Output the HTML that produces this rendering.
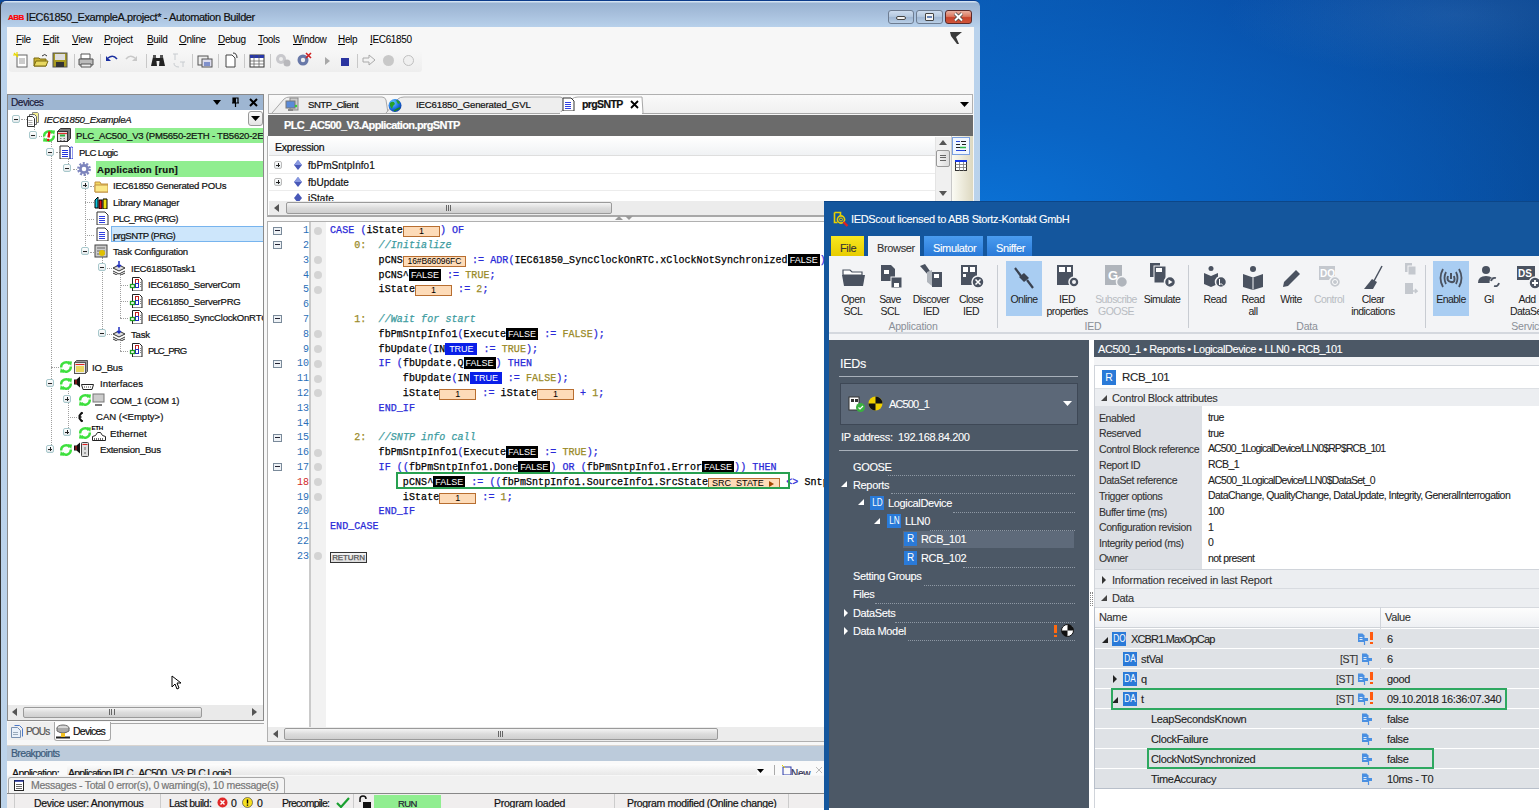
<!DOCTYPE html>
<html><head><meta charset="utf-8">
<style>
*{margin:0;padding:0;box-sizing:border-box}
html,body{width:1539px;height:810px;overflow:hidden;background:#0a4a9c;font-family:"Liberation Sans",sans-serif;font-size:10px;color:#000;position:relative}
.a{position:absolute}
.t{position:absolute;white-space:nowrap;line-height:13px;font-size:9.6px;letter-spacing:-0.25px;color:#111;-webkit-text-stroke:0.2px currentColor}
.m{font-family:"Liberation Mono",monospace}
#desk{left:975px;top:0;width:564px;height:205px;background:radial-gradient(ellipse 230px 60px at 480px 15px,rgba(90,140,200,.22),rgba(90,140,200,0)),radial-gradient(ellipse 700px 320px at 0px 215px,#0b72d6 0%,#0964c4 30%,rgba(9,84,172,0) 100%),linear-gradient(100deg,#0955ac 0%,#0849a0 45%,#07448f 100%)}
#ab{left:0;top:0;width:980px;height:810px;background:linear-gradient(#d2e2f2 0,#d2e2f2 1px,#99b3d2 2px,#a6bedb 12px,#b9d2ec 27px,#bcd3ea);border-left:1px solid #333;border-top:1px solid #0b3b8a;border-radius:6px 6px 0 0}
#abc{left:7px;top:27px;width:967px;height:783px;background:#f7f7f7}
.mi{position:absolute;top:33px;font-size:10px;letter-spacing:-0.35px;line-height:13px;white-space:nowrap}
.sep{position:absolute;top:54px;width:1px;height:14px;background:#c8c8c8}
.tb{position:absolute;top:52px;width:16px;height:16px}
.box{position:absolute;width:8px;height:8px;margin:0 0 0 0;border:1px solid #a8c8cc;background:linear-gradient(#fff,#e2e8ea);border-radius:2px}
.box:after{content:"";position:absolute;left:1px;top:2.5px;width:4px;height:1.2px;background:#222}
.box.p:before{content:"";position:absolute;left:2.5px;top:1px;width:1.2px;height:4px;background:#222}
.ico{position:absolute;width:14px;height:14px}
.dl{position:absolute;border-left:1px dotted #a0a0a0}
.dh{position:absolute;border-top:1px dotted #a0a0a0}
/* code */
.cl{position:absolute;left:330px;height:15px;line-height:15px;white-space:pre;font-family:"Liberation Mono",monospace;font-size:10px;letter-spacing:0.07px;color:#000;-webkit-text-stroke:0.25px currentColor}
.ln{position:absolute;left:284px;width:25px;text-align:right;font-family:"Liberation Mono",monospace;font-size:10px;line-height:15px;color:#2b6fb8}
.k{color:#2a2ad8}
.cm{color:#3d9ca0;font-style:italic}
.n{color:#9a8a28}
.ob{display:inline-block;height:11px;line-height:9px;vertical-align:-1px;background:#fddbb8;border:1px solid #b86e30;font-family:"Liberation Sans",sans-serif;font-size:9px;text-align:center;letter-spacing:0;color:#000;-webkit-text-stroke:0}
.fb{display:inline-block;height:12px;line-height:12px;vertical-align:0px;background:#000;color:#fff;font-family:"Liberation Sans",sans-serif;font-size:9px;text-align:center;width:32px;letter-spacing:0;-webkit-text-stroke:0}
.tr{display:inline-block;height:12px;line-height:12px;vertical-align:0px;background:#0a1fe8;color:#fff;font-family:"Liberation Sans",sans-serif;font-size:9px;text-align:center;width:32px;letter-spacing:0;-webkit-text-stroke:0}
.bp{position:absolute;left:314px;width:8px;height:8px;border-radius:50%;background:#d4d4d4}
.fold{position:absolute;left:273px;width:9px;height:8px;border:1px solid #7a8a9a;background:#eef2f6}
.fold:after{content:"";position:absolute;left:1px;top:2px;width:5px;height:1px;background:#223}
</style></head><body>
<div id="desk" class="a"></div>

<!-- ================= AUTOMATION BUILDER ================= -->
<div id="ab" class="a"></div>
<div id="abc" class="a"></div>
<!-- title -->
<div class="t" style="left:8px;top:11px;font-size:8px;font-weight:bold;color:#f00;letter-spacing:-0.5px">ABB</div>
<div class="t" style="left:26px;top:11px;font-size:11px;letter-spacing:-0.4px;color:#111">IEC61850_ExampleA.project* - Automation Builder</div>
<!-- window buttons -->
<div class="a" style="left:888px;top:10px;width:26px;height:14px;border:1px solid #6d7c91;border-radius:3px;background:linear-gradient(#cddcee,#b5c9e0 45%,#9fb6d3 55%,#b9cfe6)"></div>
<div class="a" style="left:896px;top:16px;width:10px;height:4px;background:#f4f4f4;border:1px solid #444;border-radius:2px"></div>
<div class="a" style="left:916px;top:10px;width:27px;height:14px;border:1px solid #6d7c91;border-radius:3px;background:linear-gradient(#cddcee,#b5c9e0 45%,#9fb6d3 55%,#b9cfe6)"></div>
<div class="a" style="left:925px;top:13px;width:9px;height:8px;background:#f4f4f4;border:1px solid #444;border-radius:1px"></div>
<div class="a" style="left:927px;top:16px;width:5px;height:2px;background:#6a86b6"></div>
<div class="a" style="left:945px;top:10px;width:27px;height:14px;border:1px solid #5a2a2a;border-radius:3px;background:linear-gradient(#eab0a0,#dc7a62 45%,#c8442c 55%,#d0553a)"></div>
<svg class="a" style="left:953px;top:12px" width="11" height="10"><path d="M2 1.5L9 8.5M9 1.5L2 8.5" stroke="#444" stroke-width="3.4"/><path d="M2 1.5L9 8.5M9 1.5L2 8.5" stroke="#fff" stroke-width="2"/></svg>

<!-- menu -->
<div class="mi" style="left:16px"><u style="text-decoration:underline;text-underline-offset:1px">F</u>ile</div>
<div class="mi" style="left:43px"><u style="text-decoration:underline;text-underline-offset:1px">E</u>dit</div>
<div class="mi" style="left:72px"><u style="text-decoration:underline;text-underline-offset:1px">V</u>iew</div>
<div class="mi" style="left:104px"><u style="text-decoration:underline;text-underline-offset:1px">P</u>roject</div>
<div class="mi" style="left:147px"><u style="text-decoration:underline;text-underline-offset:1px">B</u>uild</div>
<div class="mi" style="left:179px"><u style="text-decoration:underline;text-underline-offset:1px">O</u>nline</div>
<div class="mi" style="left:218px"><u style="text-decoration:underline;text-underline-offset:1px">D</u>ebug</div>
<div class="mi" style="left:258px"><u style="text-decoration:underline;text-underline-offset:1px">T</u>ools</div>
<div class="mi" style="left:293px"><u style="text-decoration:underline;text-underline-offset:1px">W</u>indow</div>
<div class="mi" style="left:338px"><u style="text-decoration:underline;text-underline-offset:1px">H</u>elp</div>
<div class="mi" style="left:370px"><u style="text-decoration:underline;text-underline-offset:1px">I</u>EC61850</div>
<svg class="a" style="left:949px;top:31px" width="14" height="14"><path d="M1 1H13L7 6L10 13H8L2 5Z" fill="#3a3a3a"/></svg>

<!-- toolbar -->
<div class="a" style="left:9px;top:50px;width:413px;height:22px;background:linear-gradient(#f7f7f7,#eeeeee);border-radius:3px"></div>
<svg class="tb" style="left:13px"><rect x="4" y="3" width="10" height="12" fill="#fff" stroke="#666"/><path d="M6 7h6M6 9h6M6 11h6" stroke="#999"/><path d="M1 1l4 4M4 0v5M0 3h5" stroke="#e8d800" stroke-width="1.2"/></svg>
<svg class="tb" style="left:33px"><path d="M1 6h5l1 1h6v7H1z" fill="#c8b030" stroke="#7a6a10"/><path d="M3 9h12l-2 5H1z" fill="#e8d860" stroke="#7a6a10"/><path d="M9 4q3-3 5 0" stroke="#333" fill="none"/></svg>
<svg class="tb" style="left:52px"><rect x="1" y="1" width="14" height="14" fill="#a89a20" stroke="#555"/><rect x="3" y="2" width="10" height="6" fill="#ddd"/><rect x="4" y="10" width="8" height="5" fill="#333"/></svg>
<div class="sep" style="left:74px"></div>
<svg class="tb" style="left:78px"><path d="M3 2h9v5H3z" fill="#fff" stroke="#555"/><path d="M1 7h14v6H1z" fill="#bbb" stroke="#555"/><path d="M3 12h10v3H3z" fill="#eee" stroke="#555"/></svg>
<div class="sep" style="left:100px"></div>
<svg class="tb" style="left:104px"><path d="M4 6q5-4 9 1" stroke="#1a2fa0" stroke-width="1.6" fill="none"/><path d="M2 4v5h5z" fill="#1a2fa0"/></svg>
<svg class="tb" style="left:123px"><path d="M12 6q-5-4-9 1" stroke="#c8c8c8" stroke-width="1.6" fill="none"/><path d="M14 4v5H9z" fill="#c8c8c8"/></svg>
<div class="sep" style="left:146px"></div>
<svg class="tb" style="left:150px"><path d="M1 14l2-9h3l1 9zM9 14l1-9h3l2 9z" fill="#222"/><rect x="6" y="6" width="4" height="3" fill="#222"/><rect x="3" y="3" width="3" height="3" fill="#555"/><rect x="10" y="3" width="3" height="3" fill="#555"/></svg>
<svg class="tb" style="left:171px"><path d="M2 2h5M4 2v6M9 10h5M12 10v5M3 11q0 4 5 4" stroke="#c8ccd0" fill="none"/></svg>
<div class="sep" style="left:192px"></div>
<svg class="tb" style="left:197px"><rect x="1" y="4" width="10" height="9" fill="#eee" stroke="#555"/><rect x="5" y="7" width="10" height="8" fill="#dde" stroke="#555"/><path d="M7 11h6M7 13h6" stroke="#2244aa"/></svg>
<div class="sep" style="left:218px"></div>
<svg class="tb" style="left:223px"><path d="M3 3h6l3 3v9H3z" fill="#fff" stroke="#444"/><path d="M10 1q4 0 4 5" stroke="#333" fill="none"/></svg>
<div class="sep" style="left:244px"></div>
<svg class="tb" style="left:249px"><rect x="1" y="3" width="14" height="12" fill="#fff" stroke="#333"/><rect x="1" y="3" width="14" height="3" fill="#2838a8"/><path d="M1 9h14M1 12h14M5 3v12M10 3v12" stroke="#555" stroke-width=".7"/></svg>
<div class="sep" style="left:270px"></div>
<svg class="tb" style="left:275px"><circle cx="6" cy="7" r="5" fill="#c8c8cc"/><circle cx="6" cy="7" r="2" fill="#eee"/><circle cx="12" cy="11" r="3.5" fill="#b8b8bc"/></svg>
<svg class="tb" style="left:296px"><circle cx="7" cy="8" r="5.5" fill="#6878a8"/><circle cx="7" cy="8" r="2.2" fill="#eee"/><path d="M10 1l5 5M15 1l-5 5" stroke="#d02020" stroke-width="1.6"/></svg>
<svg class="tb" style="left:320px"><path d="M5 5l5 4-5 4z" fill="#a8a8a8"/></svg>
<div class="a" style="left:341px;top:58px;width:8px;height:8px;background:#2a34a0"></div>
<div class="sep" style="left:357px"></div>
<svg class="tb" style="left:361px"><path d="M2 6h6V3l6 5-6 5v-3H2z" fill="none" stroke="#aaa"/></svg>
<div class="a" style="left:383px;top:55px;width:11px;height:11px;border-radius:50%;background:#c8c8c8"></div>
<div class="a" style="left:403px;top:55px;width:11px;height:11px;border-radius:50%;border:1px solid #c0c0c0;background:#f0f0f0"></div>

<!-- ===== Devices panel ===== -->
<div class="a" style="left:7px;top:94px;width:258px;height:627px;background:#fff;border:1px solid #8a8a8a"></div>
<div class="a" style="left:8px;top:95px;width:256px;height:15px;background:#9eb6d2"></div>
<div class="t" style="left:11px;top:96px;font-size:10px;letter-spacing:-0.45px;color:#1a1a3a">Devices</div>
<svg class="a" style="left:213px;top:99px" width="9" height="7"><path d="M0 1h8L4 6z" fill="#000"/></svg>
<svg class="a" style="left:231px;top:97px" width="9" height="10"><path d="M2 1h5v5H2zM1 6h7M4.5 6v4" stroke="#000" stroke-width="1.2" fill="none"/><rect x="2" y="1" width="3" height="5" fill="#000"/></svg>
<svg class="a" style="left:249px;top:98px" width="9" height="9"><path d="M1 1l7 7M8 1L1 8" stroke="#000" stroke-width="2"/></svg>
<!-- tree dropdown button -->
<div class="a" style="left:248px;top:111px;width:15px;height:15px;border:1px solid #999;border-radius:3px;background:linear-gradient(#fafafa,#e4e4e4)"></div>
<svg class="a" style="left:251px;top:116px" width="9" height="6"><path d="M0 0h9L4.5 5z" fill="#000"/></svg>
<!-- green highlights -->
<div class="a" style="left:75px;top:128px;width:189px;height:15px;background:#90ee90"></div>
<div class="a" style="left:96px;top:161px;width:168px;height:16px;background:#90ee90"></div>
<div class="a" style="left:111px;top:226px;width:153px;height:16px;background:#cde6fb;border:1px solid #77b4ee"></div>
<!-- tree lines -->
<div class="dl" style="left:34px;top:124px;height:10px"></div>
<div class="dl" style="left:51px;top:141px;height:310px"></div>
<div class="dl" style="left:68px;top:158px;height:10px"></div>
<div class="dl" style="left:85px;top:174px;height:78px"></div>
<div class="dl" style="left:102px;top:257px;height:78px"></div>
<div class="dl" style="left:120px;top:274px;height:44px"></div>
<div class="dl" style="left:120px;top:340px;height:11px"></div>
<div class="dl" style="left:68px;top:389px;height:45px"></div>
<div class="dh" style="left:21px;top:119px;width:6px"></div>
<div class="dh" style="left:39px;top:136px;width:5px"></div>
<div class="dh" style="left:56px;top:152px;width:4px"></div>
<div class="dh" style="left:73px;top:169px;width:4px"></div>
<div class="dh" style="left:90px;top:186px;width:4px"></div>
<div class="dh" style="left:85px;top:202px;width:9px"></div>
<div class="dh" style="left:85px;top:219px;width:9px"></div>
<div class="dh" style="left:85px;top:235px;width:9px"></div>
<div class="dh" style="left:90px;top:252px;width:4px"></div>
<div class="dh" style="left:107px;top:268px;width:5px"></div>
<div class="dh" style="left:120px;top:285px;width:8px"></div>
<div class="dh" style="left:120px;top:301px;width:8px"></div>
<div class="dh" style="left:120px;top:318px;width:8px"></div>
<div class="dh" style="left:107px;top:334px;width:5px"></div>
<div class="dh" style="left:120px;top:351px;width:8px"></div>
<div class="dh" style="left:51px;top:367px;width:8px"></div>
<div class="dh" style="left:68px;top:417px;width:9px"></div>
<!-- expand boxes -->
<div class="box" style="left:12px;top:115px"></div>
<div class="box" style="left:29px;top:131px"></div>
<div class="box" style="left:46px;top:148px"></div>
<div class="box" style="left:63px;top:164px"></div>
<div class="box p" style="left:81px;top:181px"></div>
<div class="box" style="left:81px;top:247px"></div>
<div class="box" style="left:98px;top:263px"></div>
<div class="box" style="left:98px;top:329px"></div>
<div class="box" style="left:46px;top:379px"></div>
<div class="box p" style="left:63px;top:395px"></div>
<div class="box p" style="left:63px;top:428px"></div>
<div class="box p" style="left:46px;top:445px"></div>
<!-- icons -->
<svg class="a" style="left:25px;top:111px" width="16" height="16"><path d="M7.5 1.5h5l1 1v9h-6z" fill="#f4ee90" stroke="#888"/><path d="M4.5 3.5h5l2 2v8h-7z" fill="#f4f4f4" stroke="#666"/><path d="M2.5 5.5h5l2 2v8h-7z" fill="#fff" stroke="#333"/><path d="M3.5 9.5h4M3.5 11.5h4M3.5 13.5h4" stroke="#aaa"/></svg>
<svg class="ico" style="left:42px;top:129px"><path d="M2.2 7.5A4.8 4.8 0 0 1 10.8 4.2" stroke="#3ee03e" stroke-width="2.4" fill="none"/><path d="M8.6 1.2L13 1.6 12.2 6z" fill="#3ee03e"/><path d="M11.8 6.5A4.8 4.8 0 0 1 3.2 9.8" stroke="#3ee03e" stroke-width="2.4" fill="none"/><path d="M5.4 12.8L1 12.4 1.8 8z" fill="#3ee03e"/><path d="M7.5 2.5l-1 6" stroke="#e81010" stroke-width="2.4"/><circle cx="6.2" cy="11" r="1.3" fill="#e81010"/></svg>
<svg class="a" style="left:56px;top:127px" width="16" height="16"><path d="M1.5 4.5l3-3h10v10l-3 3" fill="#777" stroke="#333"/><rect x="1.5" y="4.5" width="10" height="10" fill="#e4e4e4" stroke="#333"/><path d="M2 6.5h9" stroke="#e03030" stroke-width="1.2"/><rect x="4" y="7.5" width="5" height="2" fill="#30b040"/><path d="M4 11.5h1.5M7.5 11.5h1.5M4 13.5h1.5M7.5 13.5h1.5" stroke="#777"/></svg>
<svg class="ico" style="left:59px;top:145px"><path d="M1 1h8l2 2v11H1z" fill="#fff" stroke="#333"/><path d="M3 5.5h6M3 7.5h6M3 9.5h6M3 11.5h6" stroke="#2233dd"/><rect x="11" y="2" width="3" height="12" rx="1.5" fill="none" stroke="#2233dd"/></svg>
<svg class="ico" style="left:77px;top:162px"><circle cx="7" cy="7" r="5.6" fill="none" stroke="#8088c0" stroke-width="2.6" stroke-dasharray="2 1.5"/><circle cx="7" cy="7" r="3.6" fill="none" stroke="#7c84bc" stroke-width="2.6"/></svg>
<svg class="ico" style="left:94px;top:179px"><path d="M1 3h5l1 2h7v8H1z" fill="#f2d860" stroke="#c09040"/><path d="M1 6h13v7H1z" fill="#fbe888" stroke="#c09040"/></svg>
<svg class="ico" style="left:94px;top:195px"><path d="M1 5l3-3v11H1z" fill="#10c8e0" stroke="#000"/><path d="M5 5h3v9H5z" fill="#e01010" stroke="#000"/><path d="M9 4h4v10H9z" fill="#f0e010" stroke="#000"/></svg>
<svg class="ico" style="left:96px;top:211px"><path d="M1 1h8l3 3v10H1z" fill="#fff" stroke="#333"/><path d="M3 5.5h6M3 7.5h6M3 9.5h6M3 11.5h6" stroke="#3040e0" stroke-width="1"/></svg>
<svg class="ico" style="left:96px;top:227px"><path d="M1 1h8l3 3v10H1z" fill="#fff" stroke="#333"/><path d="M3 5.5h6M3 7.5h6M3 9.5h6M3 11.5h6" stroke="#3040e0" stroke-width="1"/></svg>
<svg class="ico" style="left:94px;top:244px"><rect x="1" y="1" width="12" height="12" fill="#ccc" stroke="#444"/><path d="M3 4h8M3 7h8M3 10h8" stroke="#666"/><circle cx="8" cy="9" r="3" fill="#e0c000"/></svg>
<svg class="ico" style="left:112px;top:261px"><path d="M1 7l6-3 6 3-6 3z" fill="#ddd" stroke="#333"/><path d="M1 10l6 3 6-3M1 12l6 3 6-3" stroke="#333" fill="none"/><path d="M7 0v6M5 4l2 2 2-2" stroke="#2030c0" stroke-width="1.5" fill="none"/></svg>
<svg class="ico" style="left:129px;top:277px"><path d="M3.5 0.5h7l2.5 2.5v11h-9.5z" fill="#fff" stroke="#222"/><path d="M11 5.5h1.5M11 7.5h1.5M11 9.5h1.5" stroke="#888"/><rect x="6.5" y="2.5" width="3" height="4" fill="#fff" stroke="#c02020"/><rect x="6.5" y="6.5" width="3" height="4" fill="#fff" stroke="#2030c0"/><rect x="1.5" y="7.5" width="4" height="3" fill="#fff" stroke="#20a020" stroke-width="1.3"/></svg>
<svg class="ico" style="left:129px;top:294px"><path d="M3.5 0.5h7l2.5 2.5v11h-9.5z" fill="#fff" stroke="#222"/><path d="M11 5.5h1.5M11 7.5h1.5M11 9.5h1.5" stroke="#888"/><rect x="6.5" y="2.5" width="3" height="4" fill="#fff" stroke="#c02020"/><rect x="6.5" y="6.5" width="3" height="4" fill="#fff" stroke="#2030c0"/><rect x="1.5" y="7.5" width="4" height="3" fill="#fff" stroke="#20a020" stroke-width="1.3"/></svg>
<svg class="ico" style="left:129px;top:310px"><path d="M3.5 0.5h7l2.5 2.5v11h-9.5z" fill="#fff" stroke="#222"/><path d="M11 5.5h1.5M11 7.5h1.5M11 9.5h1.5" stroke="#888"/><rect x="6.5" y="2.5" width="3" height="4" fill="#fff" stroke="#c02020"/><rect x="6.5" y="6.5" width="3" height="4" fill="#fff" stroke="#2030c0"/><rect x="1.5" y="7.5" width="4" height="3" fill="#fff" stroke="#20a020" stroke-width="1.3"/></svg>
<svg class="ico" style="left:112px;top:327px"><path d="M1 7l6-3 6 3-6 3z" fill="#ddd" stroke="#333"/><path d="M1 10l6 3 6-3M1 12l6 3 6-3" stroke="#333" fill="none"/><path d="M7 0v6M5 4l2 2 2-2" stroke="#2030c0" stroke-width="1.5" fill="none"/></svg>
<svg class="ico" style="left:129px;top:343px"><path d="M3.5 0.5h7l2.5 2.5v11h-9.5z" fill="#fff" stroke="#222"/><path d="M11 5.5h1.5M11 7.5h1.5M11 9.5h1.5" stroke="#888"/><rect x="6.5" y="2.5" width="3" height="4" fill="#fff" stroke="#c02020"/><rect x="6.5" y="6.5" width="3" height="4" fill="#fff" stroke="#2030c0"/><rect x="1.5" y="7.5" width="4" height="3" fill="#fff" stroke="#20a020" stroke-width="1.3"/></svg>
<svg class="ico" style="left:59px;top:360px"><path d="M2.2 7.5A4.8 4.8 0 0 1 10.8 4.2" stroke="#3ee03e" stroke-width="2.4" fill="none"/><path d="M8.6 1.2L13 1.6 12.2 6z" fill="#3ee03e"/><path d="M11.8 6.5A4.8 4.8 0 0 1 3.2 9.8" stroke="#3ee03e" stroke-width="2.4" fill="none"/><path d="M5.4 12.8L1 12.4 1.8 8z" fill="#3ee03e"/></svg>
<svg class="a" style="left:73px;top:359px" width="16" height="16"><path d="M1.5 3.5l2-2h11v11l-2 2" fill="#999" stroke="#555"/><rect x="1.5" y="3.5" width="11" height="11" fill="#ececec" stroke="#555"/><path d="M2.5 5.5h9" stroke="#e02020"/><path d="M4 7v6M6 7v6M8 7v6M10 7v6" stroke="#e8c800" stroke-width="1.2"/></svg>
<svg class="ico" style="left:59px;top:377px"><path d="M2.2 7.5A4.8 4.8 0 0 1 10.8 4.2" stroke="#3ee03e" stroke-width="2.4" fill="none"/><path d="M8.6 1.2L13 1.6 12.2 6z" fill="#3ee03e"/><path d="M11.8 6.5A4.8 4.8 0 0 1 3.2 9.8" stroke="#3ee03e" stroke-width="2.4" fill="none"/><path d="M5.4 12.8L1 12.4 1.8 8z" fill="#3ee03e"/></svg>
<svg class="a" style="left:73px;top:376px" width="22" height="16"><path d="M1 3.5h2.5l3.5-3v11l-3.5-3H1z" fill="#111"/><path d="M3 4v4" stroke="#e02020"/><path d="M8.5 8.5h12l-1.5 5h-9z" fill="#fff" stroke="#222"/><path d="M11 11h1M13 11h1M15 11h1M17 11h1" stroke="#444"/></svg>
<svg class="ico" style="left:78px;top:393px"><path d="M2.2 7.5A4.8 4.8 0 0 1 10.8 4.2" stroke="#3ee03e" stroke-width="2.4" fill="none"/><path d="M8.6 1.2L13 1.6 12.2 6z" fill="#3ee03e"/><path d="M11.8 6.5A4.8 4.8 0 0 1 3.2 9.8" stroke="#3ee03e" stroke-width="2.4" fill="none"/><path d="M5.4 12.8L1 12.4 1.8 8z" fill="#3ee03e"/></svg>
<svg class="ico" style="left:92px;top:393px"><rect x="1" y="1" width="11" height="8" fill="#ccc" stroke="#777"/><path d="M3 12h7" stroke="#777" stroke-width="2"/></svg>
<svg class="ico" style="left:76px;top:410px"><path d="M6 2.5L3.5 5.5v3L6 11.5" stroke="#111" stroke-width="2" fill="none"/><path d="M3.5 7h2" stroke="#111" stroke-width="1.5"/><path d="M6 2v2M6 10v2" stroke="#111" stroke-width="1.5"/></svg>
<svg class="ico" style="left:78px;top:426px"><path d="M2.2 7.5A4.8 4.8 0 0 1 10.8 4.2" stroke="#3ee03e" stroke-width="2.4" fill="none"/><path d="M8.6 1.2L13 1.6 12.2 6z" fill="#3ee03e"/><path d="M11.8 6.5A4.8 4.8 0 0 1 3.2 9.8" stroke="#3ee03e" stroke-width="2.4" fill="none"/><path d="M5.4 12.8L1 12.4 1.8 8z" fill="#3ee03e"/></svg>
<svg class="a" style="left:91px;top:424px" width="16" height="18"><text x="0.5" y="6" font-size="6.2" font-family="Liberation Sans" font-weight="bold" letter-spacing="-0.3">ETH</text><path d="M1.5 16.5v-4l3-1 2-3h3l2 3 3 1v4z" fill="#fff" stroke="#222"/><path d="M3.5 16v-2M5.5 16v-2M7.5 16v-2M9.5 16v-2M11.5 16v-2" stroke="#444" stroke-width=".8"/></svg>
<svg class="ico" style="left:59px;top:443px"><path d="M2.2 7.5A4.8 4.8 0 0 1 10.8 4.2" stroke="#3ee03e" stroke-width="2.4" fill="none"/><path d="M8.6 1.2L13 1.6 12.2 6z" fill="#3ee03e"/><path d="M11.8 6.5A4.8 4.8 0 0 1 3.2 9.8" stroke="#3ee03e" stroke-width="2.4" fill="none"/><path d="M5.4 12.8L1 12.4 1.8 8z" fill="#3ee03e"/></svg>
<svg class="a" style="left:73px;top:442px" width="18" height="16"><path d="M1 3.5h2.5l3.5-3v11l-3.5-3H1z" fill="#111"/><path d="M3 4v4" stroke="#e02020"/><rect x="8.5" y="0.5" width="7" height="14" rx="1" fill="#e0e0e0" stroke="#444"/><path d="M9.5 2.5h5" stroke="#e02020"/><path d="M12 5v3M12 10v2" stroke="#666"/></svg>
<!-- tree text -->
<div class="t" style="left:44px;top:113px;font-style:italic">IEC61850_ExampleA</div>
<div class="t" style="left:76px;top:129px">PLC_AC500_V3 (PM5650-2ETH - TB5620-2ETH)</div>
<div class="t" style="left:79px;top:146px;letter-spacing:-0.65px">PLC Logic</div>
<div class="t" style="left:97px;top:163px;font-weight:bold;letter-spacing:0.25px">Application [run]</div>
<div class="t" style="left:113px;top:179px">IEC61850 Generated POUs</div>
<div class="t" style="left:113px;top:196px">Library Manager</div>
<div class="t" style="left:113px;top:212px;letter-spacing:-0.77px">PLC_PRG (PRG)</div>
<div class="t" style="left:113px;top:229px;letter-spacing:-0.53px">prgSNTP (PRG)</div>
<div class="t" style="left:113px;top:245px">Task Configuration</div>
<div class="t" style="left:131px;top:262px">IEC61850Task1</div>
<div class="t" style="left:148px;top:278px">IEC61850_ServerCom</div>
<div class="t" style="left:148px;top:295px">IEC61850_ServerPRG</div>
<div class="t" style="left:148px;top:311px">IEC61850_SyncClockOnRTC</div>
<div class="t" style="left:131px;top:328px">Task</div>
<div class="t" style="left:148px;top:344px;letter-spacing:-0.95px">PLC_PRG</div>
<div class="t" style="left:92px;top:361px">IO_Bus</div>
<div class="t" style="left:100px;top:377px;letter-spacing:0.09px">Interfaces</div>
<div class="t" style="left:110px;top:394px">COM_1 (COM 1)</div>
<div class="t" style="left:96px;top:410px;letter-spacing:-0.03px">CAN (&lt;Empty&gt;)</div>
<div class="t" style="left:110px;top:427px;letter-spacing:0.05px">Ethernet</div>
<div class="t" style="left:100px;top:443px">Extension_Bus</div>
<!-- right clip for tree -->
<div class="a" style="left:264px;top:94px;width:3px;height:630px;background:#f7f7f7"></div>
<div class="a" style="left:263px;top:94px;width:1px;height:627px;background:#8a8a8a"></div>
<!-- cursor -->
<svg class="a" style="left:171px;top:675px" width="11" height="15"><path d="M1 1v11l3-3 2 5 2-1-2-5h4z" fill="#fff" stroke="#000"/></svg>
<!-- devices hscroll -->
<div class="a" style="left:8px;top:705px;width:255px;height:15px;background:#eaeaea"></div>
<svg class="a" style="left:12px;top:708px" width="6" height="8"><path d="M5 0v8L0 4z" fill="#555"/></svg>
<svg class="a" style="left:252px;top:708px" width="6" height="8"><path d="M0 0v8l5-4z" fill="#555"/></svg>
<div class="a" style="left:23px;top:707px;width:179px;height:11px;border:1px solid #9a9a9a;border-radius:2px;background:linear-gradient(#f4f4f4,#dcdcdc 50%,#cfcfcf)"></div>
<div class="a" style="left:109px;top:709px;width:6px;height:6px;border-left:1px solid #666;border-right:1px solid #666"></div>
<div class="a" style="left:111px;top:709px;width:2px;height:6px;border-left:1px solid #666"></div>
<!-- bottom tabs -->
<div class="a" style="left:8px;top:723px;width:256px;height:1px;background:#a8a8a8"></div>
<div class="a" style="left:8px;top:722px;width:47px;height:18px;background:#efefef"></div>
<svg class="ico" style="left:10px;top:724px"><path d="M1.5 3.5h6l3 3v7h-9z" fill="#e8f0fa" stroke="#7890b0"/><path d="M4.5 1.5h5l3 3v8" fill="none" stroke="#4a78c8"/><path d="M3 8.5h5M3 10.5h5" stroke="#9ab"/></svg>
<div class="t" style="left:26px;top:725px;color:#555;font-size:10px;letter-spacing:-0.8px">POUs</div>
<div class="a" style="left:54px;top:722px;width:57px;height:19px;background:#fff;border:1px solid #a8a8a8;border-top:none;border-radius:0 0 3px 3px"></div>
<svg class="a" style="left:55px;top:724px" width="16" height="16"><ellipse cx="8" cy="4" rx="6" ry="3" fill="#d8d8d8" stroke="#666"/><path d="M2 4v3q6 4 12 0V4" fill="#aaa" stroke="#666"/><path d="M1 13.5h14" stroke="#222" stroke-width="2"/><rect x="6" y="9" width="4" height="4" fill="#f0c020"/></svg>
<div class="t" style="left:73px;top:725px;font-size:10.5px;letter-spacing:-0.75px">Devices</div>

<!-- ===== Breakpoints / messages / status ===== -->
<div class="a" style="left:7px;top:745px;width:820px;height:16px;background:#bccbdb;border-top:1px solid #d8d4d0"></div>
<div class="t" style="left:11px;top:747px;color:#3a5a7a;font-size:10.5px;letter-spacing:-0.65px">Breakpoints</div>
<div class="a" style="left:7px;top:761px;width:820px;height:14px;background:#fafafa;overflow:hidden">
 <div class="t" style="left:5px;top:6px;font-size:10.5px;letter-spacing:-0.6px">Application:</div>
 <div class="a" style="left:60px;top:3px;width:690px;height:12px;background:linear-gradient(#fdfdfd,#e6e6e6)"></div>
 <div class="t" style="left:61px;top:6px;font-size:10.5px;letter-spacing:-0.78px">Application [PLC_AC500_V3: PLC Logic]</div>
 <svg class="a" style="left:750px;top:8px" width="7" height="4"><path d="M0 0h7L3.5 4z" fill="#000"/></svg>
 <div class="a" style="left:767px;top:4px;width:1px;height:10px;background:#aaa"></div>
 <div class="t" style="left:784px;top:6px;font-size:10px;color:#335">New</div>
 <svg class="a" style="left:775px;top:4px" width="10" height="10"><rect x="1" y="2" width="8" height="8" fill="none" stroke="#2838a8"/><path d="M0 0l3 3" stroke="#e8d800"/></svg>
 <svg class="a" style="left:808px;top:5px" width="8" height="8"><path d="M1 1l6 6M7 1L1 7" stroke="#bbb"/></svg>
</div>
<div class="a" style="left:7px;top:776px;width:820px;height:17px;background:#f1f1f1"></div>
<div class="a" style="left:8px;top:777px;width:277px;height:16px;border:1px solid #a8a8a8;border-bottom:none;border-radius:3px 3px 0 0;background:#f4f4f4"></div>
<svg class="ico" style="left:13px;top:779px"><rect x="1.5" y="1.5" width="9" height="10" fill="#fff" stroke="#222"/><path d="M1.5 2h9" stroke="#1a2a9a" stroke-width="1.5"/><path d="M3 5.5h6M3 7.5h6M3 9.5h6" stroke="#666"/></svg>
<div class="t" style="left:31px;top:779px;color:#777;font-size:10.5px;letter-spacing:-0.3px">Messages - Total 0 error(s), 0 warning(s), 10 message(s)</div>
<div class="a" style="left:7px;top:793px;width:820px;height:17px;background:#f0eeee;border-top:1px solid #888"></div>
<div class="a" style="left:14px;top:794px;width:1px;height:16px;background:#ccc"></div>
<div class="t" style="left:34px;top:797px;font-size:10.5px;letter-spacing:-0.3px">Device user: Anonymous</div>
<div class="a" style="left:160px;top:794px;width:1px;height:16px;background:#ccc"></div>
<div class="t" style="left:169px;top:797px;font-size:10.5px;letter-spacing:-0.5px">Last build:</div>
<svg class="a" style="left:217px;top:797px" width="11" height="11"><circle cx="5.5" cy="5.5" r="5" fill="#e02828"/><path d="M3.5 3.5l4 4M7.5 3.5l-4 4" stroke="#fff" stroke-width="1.4"/></svg>
<div class="t" style="left:231px;top:797px;font-size:10.5px">0</div>
<svg class="a" style="left:242px;top:797px" width="11" height="11"><circle cx="5.5" cy="5.5" r="5" fill="#f8e020" stroke="#333" stroke-width=".6"/><path d="M5.5 2.5v4M5.5 7.5v1.2" stroke="#000" stroke-width="1.4"/></svg>
<div class="t" style="left:257px;top:797px;font-size:10.5px">0</div>
<div class="t" style="left:282px;top:797px;font-size:10.5px;letter-spacing:-0.75px">Precompile:</div>
<svg class="a" style="left:336px;top:797px" width="14" height="11"><path d="M1 6l4 4 8-9" stroke="#1aa030" stroke-width="2.2" fill="none"/></svg>
<div class="a" style="left:353px;top:794px;width:1px;height:16px;background:#ccc"></div>
<svg class="a" style="left:358px;top:795px" width="14" height="14"><path d="M2 7V4q0-3 3-3t3 3" stroke="#111" stroke-width="1.5" fill="none"/><rect x="5" y="7" width="8" height="6" fill="#111"/></svg>
<div class="a" style="left:374px;top:795px;width:67px;height:15px;background:#90ee90"></div>
<div class="t" style="left:398px;top:797px;font-size:9.5px;letter-spacing:-0.6px;color:#223">RUN</div>
<div class="t" style="left:494px;top:797px;font-size:10.5px;letter-spacing:-0.25px">Program loaded</div>
<div class="a" style="left:614px;top:794px;width:1px;height:16px;background:#ccc"></div>
<div class="t" style="left:627px;top:797px;font-size:10.5px;letter-spacing:-0.35px">Program modified (Online change)</div>
<div class="a" style="left:788px;top:794px;width:1px;height:16px;background:#ccc"></div>

<!--EDITOR-->
<!-- ===== Editor ===== -->
<div class="a" style="left:267px;top:94px;width:707px;height:650px;background:#f7f7f7"></div>
<!-- tab strip -->
<div class="a" style="left:268px;top:94px;width:705px;height:20px;background:#fff;border:1px solid #b0b0b0"></div>
<div class="a" style="left:269px;top:95px;width:703px;height:18px;background:linear-gradient(#fafafa,#f0f0f0)"></div>
<svg class="a" style="left:270px;top:95px" width="380" height="19">
 <path d="M2 18L14 4Q16 2 20 2H112Q115 2 116 5L118 18" fill="#eeeeee" stroke="#a8a8a8"/>
 <path d="M116 18L128 4Q130 2 134 2H290Q293 2 294 5L296 18" fill="#eeeeee" stroke="#a8a8a8"/>
 <path d="M290 18L302 4Q304 2 308 2H372L373 18" fill="#fff" stroke="#a8a8a8"/>
</svg>
<div class="a" style="left:269px;top:113px;width:703px;height:1px;background:#a8a8a8"></div>
<div class="a" style="left:560px;top:112px;width:82px;height:2px;background:#fff"></div>
<svg class="ico" style="left:285px;top:97px"><rect x="5" y="1" width="8" height="12" fill="#ccc" stroke="#888"/><rect x="1" y="4" width="9" height="7" fill="#5a8ad8" stroke="#777"/><path d="M3 13h5" stroke="#888" stroke-width="2"/><circle cx="11" cy="9" r="1.2" fill="#3c3"/></svg>
<div class="t" style="left:308px;top:98px;letter-spacing:-0.48px">SNTP_Client</div>
<svg class="a" style="left:388px;top:98px" width="15" height="15"><defs><radialGradient id="gl" cx="35%" cy="30%" r="75%"><stop offset="0" stop-color="#6ad0ff"/><stop offset=".6" stop-color="#1a70e0"/><stop offset="1" stop-color="#0a3aa0"/></radialGradient></defs><circle cx="7" cy="7.5" r="6.5" fill="url(#gl)"/><path d="M2 5q2-2 4-1l1 2-2 2-1 3-2-3zM8 2q3 0 4 3l-2 1-1-2z" fill="#28a028"/><path d="M6 13q3-2 6-3" stroke="#1a8a1a" stroke-width="1.5" fill="none"/></svg>
<div class="t" style="left:416px;top:98px;letter-spacing:-0.15px">IEC61850_Generated_GVL</div>
<svg class="ico" style="left:562px;top:97px"><path d="M1 1h8l3 3v10H1z" fill="#fff" stroke="#333"/><path d="M3 5.5h6M3 7.5h6M3 9.5h6M3 11.5h6" stroke="#3040e0" stroke-width="1"/></svg>
<div class="t" style="left:582px;top:98px;font-size:10.5px;font-weight:bold;letter-spacing:-0.6px">prgSNTP</div>
<svg class="a" style="left:630px;top:100px" width="9" height="9"><path d="M1 1l7 7M8 1L1 8" stroke="#000" stroke-width="1.8"/></svg>
<svg class="a" style="left:960px;top:102px" width="9" height="6"><path d="M0 0h9L4.5 5z" fill="#000"/></svg>
<!-- dark header -->
<div class="a" style="left:268px;top:115px;width:705px;height:21px;background:#6b6b6b"></div>
<div class="t" style="left:284px;top:119px;font-size:11px;font-weight:bold;letter-spacing:-0.6px;color:#fff">PLC_AC500_V3.Application.prgSNTP</div>
<!-- expression / watch -->
<div class="a" style="left:267px;top:136px;width:706px;height:81px;background:#fff;border:1px solid #b0b0b0;border-top:none;border-bottom:2px solid #a8a8a8"></div>
<div class="a" style="left:269px;top:137px;width:667px;height:19px;background:linear-gradient(#fff,#f0f2f4);border-bottom:1px solid #dedede"></div>
<div class="t" style="left:275px;top:141px;font-size:10.5px;letter-spacing:-0.25px">Expression</div>
<div class="a" style="left:269px;top:173px;width:667px;height:1px;background:#ececec"></div>
<div class="a" style="left:269px;top:190px;width:667px;height:1px;background:#ececec"></div>
<div class="box p" style="left:274px;top:161px;border-color:#bbb"></div>
<div class="box p" style="left:274px;top:178px;border-color:#bbb"></div>
<svg class="a" style="left:293px;top:160px" width="10" height="10"><path d="M5 0l4 5-4 5-4-5z" fill="#4858b8"/><path d="M5 0l4 5H1z" fill="#8898e0"/></svg>
<svg class="a" style="left:293px;top:177px" width="10" height="10"><path d="M5 0l4 5-4 5-4-5z" fill="#4858b8"/><path d="M5 0l4 5H1z" fill="#8898e0"/></svg>
<svg class="a" style="left:293px;top:193px" width="10" height="8"><path d="M5 0l4 5-4 5-4-5z" fill="#4858b8"/></svg>
<div class="t" style="left:308px;top:159px;font-size:10px;letter-spacing:0.05px">fbPmSntpInfo1</div>
<div class="t" style="left:308px;top:176px;font-size:10px;letter-spacing:0.05px">fbUpdate</div>
<div class="a" style="left:269px;top:191px;width:667px;height:10px;overflow:hidden"><div class="t" style="left:39px;top:1px;font-size:10px;letter-spacing:0.05px">iState</div></div>
<!-- vscroll -->
<div class="a" style="left:935px;top:137px;width:16px;height:64px;background:#f0f0f0;border-left:1px solid #e4e4e4"></div>
<svg class="a" style="left:939px;top:140px" width="8" height="5"><path d="M0 5h8L4 0z" fill="#555"/></svg>
<svg class="a" style="left:939px;top:191px" width="8" height="5"><path d="M0 0h8L4 5z" fill="#555"/></svg>
<div class="a" style="left:936px;top:150px;width:14px;height:17px;border:1px solid #999;border-radius:2px;background:linear-gradient(90deg,#f6f6f6,#dcdcdc)"></div>
<div class="a" style="left:940px;top:155px;width:6px;height:6px;border-top:1px solid #666;border-bottom:1px solid #666"></div>
<div class="a" style="left:940px;top:157px;width:6px;height:1px;background:#666"></div>
<!-- right mini toolbar -->
<div class="a" style="left:951px;top:136px;width:22px;height:80px;background:linear-gradient(90deg,#fbfbf4,#ddd8c0);border-left:1px solid #c8c8c8"></div>
<div class="a" style="left:952px;top:137px;width:18px;height:18px;border:1px solid #7aa0e0;background:#f0f6ff"></div>
<svg class="a" style="left:954px;top:139px" width="14" height="14"><path d="M2 2.5h3M7 2.5h5M2 5.5h4M8 5.5h4M2 8.5h5M2 11.5h10" stroke="#222"/><path d="M2 2.5h4M2 11.5h9" stroke="#2848d8"/><path d="M6 8.5h6" stroke="#28b848" stroke-width="1.5"/></svg>
<svg class="a" style="left:954px;top:159px" width="14" height="13"><rect x="1.5" y="1.5" width="11" height="10" fill="#fff" stroke="#333"/><rect x="1" y="1" width="12" height="2" fill="#1838e8"/><path d="M1.5 5.5h11M1.5 8.5h11M5.5 3v9M9.5 3v9" stroke="#777" stroke-width=".8"/></svg>
<!-- hscroll watch -->
<div class="a" style="left:269px;top:201px;width:667px;height:14px;background:#ececec"></div>
<svg class="a" style="left:274px;top:204px" width="5" height="8"><path d="M5 0v8L0 4z" fill="#555"/></svg>
<div class="a" style="left:286px;top:202px;width:326px;height:12px;border:1px solid #9a9a9a;border-radius:2px;background:linear-gradient(#f4f4f4,#dcdcdc 50%,#cfcfcf)"></div>
<div class="a" style="left:446px;top:205px;width:5px;height:6px;border-left:1px solid #666;border-right:1px solid #666"></div>
<div class="a" style="left:448px;top:205px;width:1px;height:6px;background:#666"></div>
<!-- splitter -->
<div class="a" style="left:268px;top:217px;width:705px;height:4px;background:#f7f7f7"></div>
<svg class="a" style="left:614px;top:215px" width="20" height="6"><path d="M1 5l4-4 4 4zM11 1h8l-4 4z" fill="#999"/></svg>
<!-- code area -->
<div class="a" style="left:267px;top:221px;width:706px;height:521px;background:#fff;border:1px solid #b0b0b0"></div>
<div class="a" style="left:311px;top:222px;width:15px;height:505px;background:#f2f2f2"></div>
<div class="a" style="left:309px;top:222px;width:2px;height:505px;background:#cacaca"></div>
<!-- code hscroll -->
<div class="a" style="left:268px;top:727px;width:704px;height:14px;background:#ececec"></div>
<svg class="a" style="left:273px;top:730px" width="5" height="8"><path d="M5 0v8L0 4z" fill="#555"/></svg>
<div class="a" style="left:284px;top:728px;width:434px;height:12px;border:1px solid #9a9a9a;border-radius:2px;background:linear-gradient(#f4f4f4,#dcdcdc 50%,#cfcfcf)"></div>
<div class="a" style="left:498px;top:731px;width:5px;height:6px;border-left:1px solid #666;border-right:1px solid #666"></div>
<div class="a" style="left:500px;top:731px;width:1px;height:6px;background:#666"></div>
<div class="fold" style="top:226.6px"></div>
<div class="ln" style="top:223.1px">1</div>
<div class="bp" style="top:226.6px"></div>
<div class="cl" style="top:223.1px"><span class="k">CASE</span> <span class="k">(</span>iState<span class="ob" style="width:37px">1</span><span class="k">)</span> <span class="k">OF</span></div>
<div class="fold" style="top:241.4px"></div>
<div class="ln" style="top:237.9px">2</div>
<div class="cl" style="top:237.9px">    <span class="n">0:</span>  <span class="cm">//Initialize</span></div>
<div class="ln" style="top:252.7px">3</div>
<div class="bp" style="top:256.2px"></div>
<div class="cl" style="top:252.7px">        pCNS<span class="ob" style="width:63px;font-size:8.5px;letter-spacing:-0.1px">16#B66096FC</span> <span class="k">:=</span> <span class="k">ADR(</span>IEC61850_SyncClockOnRTC.xClockNotSynchronized<span class="fb">FALSE</span><span class="k">)</span></div>
<div class="ln" style="top:267.5px">4</div>
<div class="bp" style="top:271.0px"></div>
<div class="cl" style="top:267.5px">        pCNS^<span class="fb">FALSE</span> <span class="k">:=</span> <span class="n">TRUE</span><span class="k">;</span></div>
<div class="ln" style="top:282.3px">5</div>
<div class="bp" style="top:285.8px"></div>
<div class="cl" style="top:282.3px">        iState<span class="ob" style="width:37px">1</span> <span class="k">:=</span> <span class="n">2</span><span class="k">;</span></div>
<div class="ln" style="top:297.1px">6</div>
<div class="cl" style="top:297.1px"></div>
<div class="fold" style="top:315.4px"></div>
<div class="ln" style="top:311.9px">7</div>
<div class="cl" style="top:311.9px">    <span class="n">1:</span>  <span class="cm">//Wait for start</span></div>
<div class="ln" style="top:326.7px">8</div>
<div class="bp" style="top:330.2px"></div>
<div class="cl" style="top:326.7px">        fbPmSntpInfo1<span class="k">(</span>Execute<span class="fb">FALSE</span> <span class="k">:=</span> <span class="n">FALSE</span><span class="k">);</span></div>
<div class="ln" style="top:341.5px">9</div>
<div class="bp" style="top:345.0px"></div>
<div class="cl" style="top:341.5px">        fbUpdate<span class="k">(</span>IN<span class="tr">TRUE</span> <span class="k">:=</span> <span class="n">TRUE</span><span class="k">);</span></div>
<div class="fold" style="top:359.8px"></div>
<div class="ln" style="top:356.3px">10</div>
<div class="bp" style="top:359.8px"></div>
<div class="cl" style="top:356.3px">        <span class="k">IF</span> <span class="k">(</span>fbUpdate.Q<span class="fb">FALSE</span><span class="k">)</span> <span class="k">THEN</span></div>
<div class="ln" style="top:371.1px">11</div>
<div class="bp" style="top:374.6px"></div>
<div class="cl" style="top:371.1px">            fbUpdate<span class="k">(</span>IN<span class="tr">TRUE</span> <span class="k">:=</span> <span class="n">FALSE</span><span class="k">);</span></div>
<div class="ln" style="top:385.9px">12</div>
<div class="bp" style="top:389.4px"></div>
<div class="cl" style="top:385.9px">            iState<span class="ob" style="width:37px">1</span> <span class="k">:=</span> iState<span class="ob" style="width:37px">1</span> <span class="k">+</span> <span class="n">1</span><span class="k">;</span></div>
<div class="ln" style="top:400.7px">13</div>
<div class="cl" style="top:400.7px">        <span class="k">END_IF</span></div>
<div class="ln" style="top:415.5px">14</div>
<div class="cl" style="top:415.5px"></div>
<div class="fold" style="top:433.8px"></div>
<div class="ln" style="top:430.3px">15</div>
<div class="cl" style="top:430.3px">    <span class="n">2:</span>  <span class="cm">//SNTP info call</span></div>
<div class="ln" style="top:445.1px">16</div>
<div class="bp" style="top:448.6px"></div>
<div class="cl" style="top:445.1px">        fbPmSntpInfo1<span class="k">(</span>Execute<span class="fb">FALSE</span> <span class="k">:=</span> <span class="n">TRUE</span><span class="k">);</span></div>
<div class="fold" style="top:463.4px"></div>
<div class="ln" style="top:459.9px">17</div>
<div class="bp" style="top:463.4px"></div>
<div class="cl" style="top:459.9px">        <span class="k">IF</span> <span class="k">((</span>fbPmSntpInfo1.Done<span class="fb">FALSE</span><span class="k">)</span> <span class="k">OR</span> <span class="k">(</span>fbPmSntpInfo1.Error<span class="fb">FALSE</span><span class="k">))</span> <span class="k">THEN</span></div>
<div class="ln" style="top:474.7px;color:#d02828">18</div>
<div class="bp" style="top:478.2px"></div>
<div class="cl" style="top:474.7px">            pCNS^<span class="fb">FALSE</span> <span class="k">:=</span> <span class="k">((</span>fbPmSntpInfo1.SourceInfo1.SrcState<span class="ob" style="width:72px;text-align:left;padding-left:3px;position:relative">SRC_STATE_<span style="position:absolute;right:5px;top:2px;width:0;height:0;border-left:5px solid #a04800;border-top:3.5px solid transparent;border-bottom:3.5px solid transparent"></span></span> <span class="k">&lt;&gt;</span> SntpState</div>
<div class="ln" style="top:489.5px">19</div>
<div class="bp" style="top:493.0px"></div>
<div class="cl" style="top:489.5px">            iState<span class="ob" style="width:37px">1</span> <span class="k">:=</span> <span class="n">1</span><span class="k">;</span></div>
<div class="ln" style="top:504.3px">20</div>
<div class="cl" style="top:504.3px">        <span class="k">END_IF</span></div>
<div class="ln" style="top:519.1px">21</div>
<div class="cl" style="top:519.1px"><span class="k">END_CASE</span></div>
<div class="ln" style="top:533.9px">22</div>
<div class="cl" style="top:533.9px"></div>
<div class="ln" style="top:548.7px">23</div>
<div class="bp" style="top:552.2px"></div>
<div class="cl" style="top:548.7px"><span style="display:inline-block;width:37px;height:11px;line-height:10px;vertical-align:-1px;border:1px solid #333;background:linear-gradient(#f4f4f4,#dcdcdc);color:#555;font-family:Liberation Sans;font-size:8px;text-align:center;letter-spacing:-0.1px">RETURN</span></div>
<div class="a" style="left:396px;top:472px;width:394px;height:17px;border:2px solid #28a050"></div>
<!--/EDITOR-->

<div class="a" style="left:0;top:808px;width:825px;height:2px;background:#fff"></div>
<!--IEDSCOUT-->
<!-- ================= IEDSCOUT ================= -->
<style>
.s{position:absolute;white-space:nowrap;line-height:14px;font-size:11px;letter-spacing:-0.35px;-webkit-text-stroke:0.1px currentColor}
.rb{position:absolute;text-align:center;font-size:10.5px;line-height:11.5px;letter-spacing:-0.55px;color:#222;white-space:nowrap}
.rg{position:absolute;text-align:center;font-size:10.5px;line-height:12px;color:#8a8f96;letter-spacing:-0.2px}
.bdg{position:absolute;height:14px;line-height:14px;background:#2a7ad8;color:#fff;font-size:10px;text-align:center;letter-spacing:0;overflow:hidden;white-space:nowrap}
.bdg i{font-style:normal;display:inline-block;transform:scaleX(.82);transform-origin:50% 50%;margin:0 -3px}
.dot{position:absolute;border-top:1px dotted #8e98a4;height:1px}
.ar{position:absolute;width:14px;height:20px;line-height:14px;font-size:11px;color:#333;letter-spacing:-0.6px;text-align:right}
</style>
<div class="a" style="left:824px;top:201px;width:715px;height:609px;background:#14569d;border-top:1px solid #0c4688"></div>
<svg class="a" style="left:833px;top:211px" width="16" height="16"><path d="M1.5 1.5h6v3" fill="none" stroke="#e8d000" stroke-width="1.6"/><path d="M1.5 1.5v10h3" fill="none" stroke="#e8d000" stroke-width="1.6"/><circle cx="8" cy="8.5" r="3.6" fill="none" stroke="#e8d000" stroke-width="1.6"/><circle cx="8" cy="8.5" r="1.5" fill="none" stroke="#e8d000" stroke-width="1"/><path d="M10.5 11l4 4" stroke="#e02020" stroke-width="2.4"/></svg>
<div class="s" style="left:851px;top:212px;font-size:11px;letter-spacing:-0.36px;color:#fff">IEDScout licensed to ABB Stortz-Kontakt GmbH</div>
<!-- tabs -->
<div class="a" style="left:831px;top:236px;width:33px;height:20px;background:linear-gradient(#f8e820,#e8cc00)"></div>
<div class="s" style="left:840px;top:241px;color:#333">File</div>
<div class="a" style="left:868px;top:236px;width:52px;height:23px;background:#f3f4f6"></div>
<div class="s" style="left:877px;top:241px;color:#333">Browser</div>
<div class="a" style="left:924px;top:236px;width:59px;height:20px;background:linear-gradient(#4a9cf0,#2a7ad8)"></div>
<div class="s" style="left:933px;top:241px;color:#fff">Simulator</div>
<div class="a" style="left:987px;top:236px;width:45px;height:20px;background:linear-gradient(#4a9cf0,#2a7ad8)"></div>
<div class="s" style="left:996px;top:241px;color:#fff">Sniffer</div>
<!-- ribbon -->
<div class="a" style="left:829px;top:256px;width:710px;height:78px;background:#f3f4f6;border-bottom:2px solid #d4d8de"></div>
<div class="a" style="left:1006px;top:261px;width:36px;height:55px;background:#a9cdf2"></div>
<div class="a" style="left:1433px;top:261px;width:36px;height:55px;background:#a9cdf2"></div>
<div class="a" style="left:997px;top:265px;width:1px;height:63px;background:#c8ccd2"></div>
<div class="a" style="left:1188px;top:265px;width:1px;height:63px;background:#c8ccd2"></div>
<div class="a" style="left:1425px;top:265px;width:1px;height:63px;background:#c8ccd2"></div>
<!-- ribbon icons -->
<svg class="a" style="left:841px;top:264px" width="25" height="25"><path d="M2 6h7l2 2h10v3H2z" fill="#fff" stroke="#4a5260" stroke-width="1.2"/><path d="M1 11h23l-2 11H3z" fill="#4a5260"/></svg>
<svg class="a" style="left:879px;top:264px" width="25" height="25"><path d="M2 1h10l4 4v12H2z" fill="#4a5260"/><rect x="5" y="6" width="5" height="4" fill="#fff"/><rect x="12" y="13" width="11" height="11" fill="#4a5260" stroke="#f3f4f6"/><rect x="15" y="19" width="5" height="4" fill="#fff"/></svg>
<svg class="a" style="left:919px;top:264px" width="25" height="25"><path d="M1 2l5-2 7 10-3 2z" fill="#4a5260"/><path d="M8 8l5-2v16l-5-4z" fill="#b0b5bc"/><rect x="13" y="8" width="10" height="15" fill="#4a5260"/><rect x="15" y="10" width="5" height="4" fill="#fff"/></svg>
<svg class="a" style="left:960px;top:264px" width="25" height="25"><rect x="1" y="1" width="16" height="20" fill="#4a5260"/><rect x="3" y="3" width="5" height="5" fill="#fff"/><rect x="10" y="3" width="5" height="5" fill="#fff"/><rect x="3" y="10" width="3" height="3" fill="#fff"/><circle cx="18" cy="18" r="6" fill="#4a5260" stroke="#f3f4f6" stroke-width="1.5"/><path d="M15.5 15.5l5 5M20.5 15.5l-5 5" stroke="#fff" stroke-width="1.5"/></svg>
<svg class="a" style="left:1012px;top:265px" width="24" height="26"><path d="M3 3l6 8M15 15l6 8" stroke="#3a4250" stroke-width="2.2"/><path d="M7 12l5-4 5 5-5 4z" fill="#3a4250"/></svg>
<svg class="a" style="left:1056px;top:264px" width="25" height="25"><rect x="1" y="1" width="16" height="20" fill="#4a5260"/><rect x="3" y="3" width="6" height="5" fill="#fff"/><rect x="11" y="3" width="4" height="5" fill="#fff"/><circle cx="18" cy="18" r="5" fill="#4a5260" stroke="#f3f4f6" stroke-width="1.5"/><circle cx="18" cy="18" r="2" fill="#f3f4f6"/></svg>
<svg class="a" style="left:1104px;top:264px" width="25" height="25"><rect x="1" y="1" width="17" height="20" fill="#b0b5bc"/><text x="4" y="16" font-size="13" font-family="Liberation Sans" fill="#fff" font-weight="bold">G</text><circle cx="18" cy="18" r="5.5" fill="#b0b5bc" stroke="#f3f4f6" stroke-width="1.5"/></svg>
<svg class="a" style="left:1149px;top:262px" width="28" height="27"><rect x="1" y="1" width="10" height="14" fill="#4a5260"/><rect x="5" y="4" width="12" height="17" fill="#4a5260" stroke="#f3f4f6"/><rect x="7" y="6" width="6" height="4" fill="#fff"/><circle cx="21" cy="20" r="5.5" fill="#4a5260" stroke="#f3f4f6" stroke-width="1.5"/><path d="M19.5 17.5v5l4-2.5z" fill="#fff"/></svg>
<svg class="a" style="left:1203px;top:265px" width="25" height="25"><circle cx="8" cy="3.5" r="2.5" fill="#4a5260"/><path d="M1 8l7 3 7-3v11l-7 3-7-3z" fill="#4a5260"/><circle cx="18" cy="17" r="5.5" fill="#4a5260" stroke="#f3f4f6" stroke-width="1.5"/><path d="M16.5 14v6l1.5-1.5 2 2" stroke="#fff" fill="none"/></svg>
<svg class="a" style="left:1242px;top:265px" width="22" height="25"><circle cx="11" cy="4" r="3" fill="#4a5260"/><path d="M1 9l10 3.5 10-3.5v13l-10 3-10-3z" fill="#4a5260"/><path d="M11 12.5v12" stroke="#f3f4f6"/></svg>
<svg class="a" style="left:1281px;top:266px" width="22" height="22"><path d="M3 16l12-12 4 4-12 12-5 1z" fill="#4a5260"/></svg>
<svg class="a" style="left:1318px;top:265px" width="24" height="24"><rect x="1" y="1" width="16" height="14" fill="#c4c8ce"/><text x="2" y="12" font-size="10" font-family="Liberation Sans" fill="#fff" font-weight="bold">DO</text><circle cx="17" cy="17" r="5.5" fill="#c4c8ce" stroke="#f3f4f6" stroke-width="1.5"/><circle cx="17" cy="17" r="2.5" fill="none" stroke="#fff"/></svg>
<svg class="a" style="left:1362px;top:265px" width="24" height="25"><path d="M20 1l-8 15" stroke="#4a5260" stroke-width="1.5"/><path d="M10 14l5 3-4 7H2z" fill="#4a5260"/></svg>
<svg class="a" style="left:1404px;top:262px" width="14" height="14"><rect x="1" y="1" width="7" height="9" fill="#c4c8ce"/><rect x="4" y="4" width="8" height="9" fill="#c4c8ce" stroke="#f3f4f6"/></svg>
<svg class="a" style="left:1404px;top:282px" width="14" height="14"><rect x="1" y="1" width="8" height="11" fill="#c4c8ce"/><path d="M8 9h5l-2-2M13 9l-2 2" stroke="#c4c8ce" stroke-width="1.5" fill="none"/></svg>
<svg class="a" style="left:1437px;top:267px" width="28" height="22"><path d="M6 2q-5 9 0 18M22 2q5 9 0 18M9 5q-3 6 0 12M19 5q3 6 0 12" stroke="#4a5260" stroke-width="1.8" fill="none"/><path d="M11 9q-2 5 3 6t3-6" stroke="#4a5260" stroke-width="2" fill="none"/><path d="M14 6v6" stroke="#4a5260" stroke-width="2"/></svg>
<svg class="a" style="left:1478px;top:265px" width="24" height="24"><circle cx="8" cy="5" r="4" fill="#4a5260"/><path d="M0 18q0-7 8-7t8 7z" fill="#4a5260"/><circle cx="17" cy="17" r="5.5" fill="#f3f4f6"/><path d="M13 16q1-4 5-3M21 18q-1 4-5 3" stroke="#4a5260" stroke-width="1.8" fill="none"/></svg>
<svg class="a" style="left:1516px;top:265px" width="23" height="25"><rect x="1" y="1" width="18" height="14" fill="#4a5260"/><text x="2" y="12" font-size="10" font-family="Liberation Sans" fill="#fff" font-weight="bold">DS</text><circle cx="19" cy="18" r="6" fill="#4a5260" stroke="#f3f4f6" stroke-width="1.5"/><path d="M19 15v6M16 18h6" stroke="#fff" stroke-width="1.8"/></svg>
<!-- ribbon labels -->
<div class="rb" style="left:833px;top:294px;width:40px">Open<br>SCL</div>
<div class="rb" style="left:870px;top:294px;width:40px">Save<br>SCL</div>
<div class="rb" style="left:906px;top:294px;width:50px">Discover<br>IED</div>
<div class="rb" style="left:951px;top:294px;width:40px">Close<br>IED</div>
<div class="rb" style="left:1004px;top:294px;width:40px">Online</div>
<div class="rb" style="left:1040px;top:294px;width:54px">IED<br>properties</div>
<div class="rb" style="left:1091px;top:294px;width:50px;color:#b8bcc2">Subscribe<br>GOOSE</div>
<div class="rb" style="left:1137px;top:294px;width:50px">Simulate</div>
<div class="rb" style="left:1195px;top:294px;width:40px">Read</div>
<div class="rb" style="left:1233px;top:294px;width:40px">Read<br>all</div>
<div class="rb" style="left:1271px;top:294px;width:40px">Write</div>
<div class="rb" style="left:1309px;top:294px;width:40px;color:#b8bcc2">Control</div>
<div class="rb" style="left:1343px;top:294px;width:60px">Clear<br>indications</div>
<div class="rb" style="left:1431px;top:294px;width:40px">Enable</div>
<div class="rb" style="left:1474px;top:294px;width:30px">GI</div>
<div class="rb" style="left:1507px;top:294px;width:40px">Add<br>DataSet</div>
<div class="rg" style="left:873px;top:320px;width:80px">Application</div>
<div class="rg" style="left:1073px;top:320px;width:40px">IED</div>
<div class="rg" style="left:1287px;top:320px;width:40px">Data</div>
<div class="rg" style="left:1508px;top:320px;width:40px">Service</div>

<!-- content -->
<div class="a" style="left:829px;top:334px;width:710px;height:476px;background:#f3f4f6"></div>
<!-- left dark panel -->
<div class="a" style="left:829px;top:340px;width:260px;height:468px;background:#4c5866"></div>
<div class="s" style="left:840px;top:357px;font-size:12.5px;color:#fff;letter-spacing:-0.3px">IEDs</div>
<div class="a" style="left:839px;top:376px;width:239px;height:1px;background:#a8b0ba"></div>
<div class="a" style="left:840px;top:383px;width:238px;height:42px;background:#5c6878;border:1px solid #3e4856"></div>
<svg class="a" style="left:848px;top:396px" width="18" height="16"><rect x="1" y="1" width="10" height="13" fill="#fff" stroke="#333"/><rect x="3" y="3" width="3" height="3" fill="#333"/><rect x="7" y="3" width="3" height="3" fill="#333"/><circle cx="12.5" cy="11.5" r="4.5" fill="#3ab040"/><path d="M10.5 11.5l1.5 1.5 3-3" stroke="#fff" stroke-width="1.2" fill="none"/></svg>
<svg class="a" style="left:868px;top:396px" width="15" height="15"><circle cx="7.5" cy="7.5" r="7" fill="#f0d000"/><path d="M7.5 7.5L7.5 0.5A7 7 0 0 1 14.5 7.5zM7.5 7.5L7.5 14.5A7 7 0 0 1 0.5 7.5z" fill="#111"/></svg>
<div class="s" style="left:889px;top:397px;color:#fff;letter-spacing:-0.85px">AC500_1</div>
<svg class="a" style="left:1063px;top:401px" width="9" height="6"><path d="M0 0h9L4.5 5z" fill="#fff"/></svg>
<div class="s" style="left:841px;top:430px;color:#fff">IP address:&nbsp; 192.168.84.200</div>
<div class="a" style="left:839px;top:450px;width:239px;height:1px;background:#a8b0ba"></div>
<!-- tree -->
<div class="s" style="left:853px;top:460px;color:#fff">GOOSE</div>
<div class="dot" style="left:888px;top:475px;width:187px"></div>
<svg class="a" style="left:841px;top:481px" width="7" height="7"><path d="M6 0v6H0z" fill="#fff"/></svg>
<div class="s" style="left:853px;top:478px;color:#fff">Reports</div>
<div class="dot" style="left:891px;top:493px;width:184px"></div>
<svg class="a" style="left:858px;top:499px" width="7" height="7"><path d="M6 0v6H0z" fill="#fff"/></svg>
<div class="bdg" style="left:870px;top:496px;width:14px"><i>LD</i></div>
<div class="s" style="left:888px;top:496px;color:#fff">LogicalDevice</div>
<div class="dot" style="left:953px;top:512px;width:122px"></div>
<svg class="a" style="left:874px;top:518px" width="7" height="7"><path d="M6 0v6H0z" fill="#fff"/></svg>
<div class="bdg" style="left:887px;top:514px;width:14px"><i>LN</i></div>
<div class="s" style="left:905px;top:514px;color:#fff">LLN0</div>
<div class="dot" style="left:930px;top:530px;width:145px"></div>
<div class="a" style="left:903px;top:531px;width:171px;height:17px;background:#5e6a7a"></div>
<div class="bdg" style="left:904px;top:532px;width:13px">R</div>
<div class="s" style="left:921px;top:532px;color:#fff">RCB_101</div>
<div class="bdg" style="left:904px;top:551px;width:13px">R</div>
<div class="s" style="left:921px;top:551px;color:#fff">RCB_102</div>
<div class="dot" style="left:963px;top:567px;width:112px"></div>
<div class="s" style="left:853px;top:569px;color:#fff">Setting Groups</div>
<div class="dot" style="left:924px;top:585px;width:151px"></div>
<div class="s" style="left:853px;top:587px;color:#fff">Files</div>
<div class="dot" style="left:875px;top:603px;width:200px"></div>
<svg class="a" style="left:844px;top:609px" width="5" height="8"><path d="M0 0v8l4-4z" fill="#fff"/></svg>
<div class="s" style="left:853px;top:606px;color:#fff">DataSets</div>
<div class="dot" style="left:895px;top:622px;width:180px"></div>
<svg class="a" style="left:844px;top:627px" width="5" height="8"><path d="M0 0v8l4-4z" fill="#fff"/></svg>
<div class="s" style="left:853px;top:624px;color:#fff">Data Model</div>
<div class="dot" style="left:908px;top:640px;width:167px"></div>
<div class="a" style="left:1054px;top:625px;width:3px;height:8px;background:#ff6a10"></div>
<div class="a" style="left:1054px;top:635px;width:3px;height:2px;background:#ff6a10"></div>
<svg class="a" style="left:1061px;top:624px" width="13" height="13"><circle cx="6.5" cy="6.5" r="6" fill="#fff"/><path d="M6.5 6.5V0.5A6 6 0 0 1 12.5 6.5zM6.5 6.5V12.5A6 6 0 0 1 0.5 6.5z" fill="#111"/><circle cx="6.5" cy="6.5" r="6" fill="none" stroke="#111"/></svg>
<!-- splitter -->
<div class="a" style="left:1089px;top:340px;width:5px;height:470px;background:#fff"></div>
<div class="a" style="left:1090px;top:592px;width:3px;height:14px;border-left:1px dotted #888;border-right:1px dotted #888"></div>
<!-- right panel -->
<div class="a" style="left:1094px;top:340px;width:445px;height:17px;background:#4c5866"></div>
<div class="s" style="left:1098px;top:342px;color:#fff;letter-spacing:-0.45px">AC500_1 • Reports • LogicalDevice • LLN0 • RCB_101</div>
<div class="a" style="left:1094px;top:365px;width:445px;height:445px;background:#fff;border-left:1px solid #d0d4da;border-top:1px solid #d0d4da"></div>
<div class="bdg" style="left:1102px;top:370px;width:14px;height:15px;line-height:15px;font-size:10.5px">R</div>
<div class="s" style="left:1122px;top:370px;font-size:11.5px;color:#222">RCB_101</div>
<div class="a" style="left:1095px;top:388px;width:444px;height:18px;background:#eceef1;border-top:1px solid #dde0e4"></div>
<svg class="a" style="left:1101px;top:395px" width="7" height="7"><path d="M6 0v6H0z" fill="#444"/></svg>
<div class="s" style="left:1112px;top:391px;color:#333">Control Block attributes</div>
<div class="a" style="left:1095px;top:406px;width:107px;height:163px;background:#dde0e5"></div>
<div class="a" style="left:1095px;top:569px;width:444px;height:1px;background:#d0d4da"></div>
<div class="s" style="left:1099px;top:410.5px;font-size:10.5px;color:#333;letter-spacing:-0.42px">Enabled</div>
<div class="s" style="left:1208px;top:410.0px;font-size:10.5px;color:#222;letter-spacing:-0.55px">true</div>
<div class="s" style="left:1099px;top:426.2px;font-size:10.5px;color:#333;letter-spacing:-0.42px">Reserved</div>
<div class="s" style="left:1208px;top:425.7px;font-size:10.5px;color:#222;letter-spacing:-0.55px">true</div>
<div class="s" style="left:1099px;top:441.8px;font-size:10.5px;color:#333;letter-spacing:-0.42px">Control Block reference</div>
<div class="s" style="left:1208px;top:441.3px;font-size:10.5px;color:#222;letter-spacing:-0.88px">AC500_1LogicalDevice/LLN0$RP$RCB_101</div>
<div class="s" style="left:1099px;top:457.5px;font-size:10.5px;color:#333;letter-spacing:-0.42px">Report ID</div>
<div class="s" style="left:1208px;top:457.0px;font-size:10.5px;color:#222;letter-spacing:-0.55px">RCB_1</div>
<div class="s" style="left:1099px;top:473.1px;font-size:10.5px;color:#333;letter-spacing:-0.42px">DataSet reference</div>
<div class="s" style="left:1208px;top:472.6px;font-size:10.5px;color:#222;letter-spacing:-0.74px">AC500_1LogicalDevice/LLN0$DataSet_0</div>
<div class="s" style="left:1099px;top:488.8px;font-size:10.5px;color:#333;letter-spacing:-0.42px">Trigger options</div>
<div class="s" style="left:1208px;top:488.3px;font-size:10.5px;color:#222;letter-spacing:-0.55px">DataChange, QualityChange, DataUpdate, Integrity, GeneralInterrogation</div>
<div class="s" style="left:1099px;top:504.5px;font-size:10.5px;color:#333;letter-spacing:-0.42px">Buffer time (ms)</div>
<div class="s" style="left:1208px;top:504.0px;font-size:10.5px;color:#222;letter-spacing:-0.55px">100</div>
<div class="s" style="left:1099px;top:520.1px;font-size:10.5px;color:#333;letter-spacing:-0.42px">Configuration revision</div>
<div class="s" style="left:1208px;top:519.6px;font-size:10.5px;color:#222;letter-spacing:-0.55px">1</div>
<div class="s" style="left:1099px;top:535.8px;font-size:10.5px;color:#333;letter-spacing:-0.42px">Integrity period (ms)</div>
<div class="s" style="left:1208px;top:535.3px;font-size:10.5px;color:#222;letter-spacing:-0.55px">0</div>
<div class="s" style="left:1099px;top:551.4px;font-size:10.5px;color:#333;letter-spacing:-0.42px">Owner</div>
<div class="s" style="left:1208px;top:550.9px;font-size:10.5px;color:#222;letter-spacing:-0.55px">not present</div>
<div class="a" style="left:1095px;top:570px;width:444px;height:19px;background:#eceef1;border-bottom:1px solid #d8dbe0"></div>
<svg class="a" style="left:1102px;top:576px" width="5" height="8"><path d="M0 0v8l4-4z" fill="#333"/></svg>
<div class="s" style="left:1112px;top:573px;color:#333;letter-spacing:-0.22px">Information received in last Report</div>
<div class="a" style="left:1095px;top:589px;width:444px;height:18px;background:#eceef1"></div>
<svg class="a" style="left:1101px;top:595px" width="7" height="7"><path d="M6 0v6H0z" fill="#444"/></svg>
<div class="s" style="left:1112px;top:591px;color:#333">Data</div>
<!-- data table -->
<div class="a" style="left:1095px;top:607px;width:444px;height:21px;background:linear-gradient(#fdfdfd,#eef0f3);border-top:1px solid #d6d9de;border-bottom:1px solid #cfd3d8"></div>
<div class="a" style="left:1380px;top:607px;width:1px;height:181px;background:#d0d4da"></div>
<div class="s" style="left:1099px;top:610px;color:#333">Name</div>
<div class="s" style="left:1385px;top:610px;color:#333">Value</div>
<div class="a" style="left:1095px;top:629px;width:444px;height:19px;background:#dfe2e6"></div>
<svg class="a" style="left:1102px;top:637px" width="7" height="7"><path d="M6 0v6H0z" fill="#222"/></svg>
<div class="bdg" style="left:1112px;top:632px;width:14px"><i>DO</i></div>
<div class="s" style="left:1131px;top:631.5px;color:#222;letter-spacing:-0.85px">XCBR1.MaxOpCap</div>
<svg class="a" style="left:1357px;top:633px" width="12" height="12"><path d="M1 0.5h4.5l2 2V9H1z" fill="#4a90e2"/><path d="M2.5 4.5h3M2.5 6.5h3" stroke="#dbe8f8"/><path d="M7 5h4v3H8" fill="#4a90e2"/><path d="M7.5 5v7" stroke="#4a90e2" stroke-width="1.2"/></svg>
<div class="a" style="left:1370px;top:632px;width:3px;height:8px;background:#ff5a10"></div><div class="a" style="left:1370px;top:642px;width:3px;height:2px;background:#ff5a10"></div>
<div class="s" style="left:1387px;top:631.5px;color:#222">6</div>
<div class="a" style="left:1095px;top:649px;width:444px;height:19px;background:#dfe2e6"></div>
<div class="bdg" style="left:1123px;top:652px;width:14px"><i>DA</i></div>
<div class="s" style="left:1141px;top:651.5px;color:#222">stVal</div>
<div class="s" style="left:1340px;top:651.5px;color:#333;font-size:10.5px">[ST]</div>
<svg class="a" style="left:1361px;top:653px" width="12" height="12"><path d="M1 0.5h4.5l2 2V9H1z" fill="#4a90e2"/><path d="M2.5 4.5h3M2.5 6.5h3" stroke="#dbe8f8"/><path d="M7 5h4v3H8" fill="#4a90e2"/><path d="M7.5 5v7" stroke="#4a90e2" stroke-width="1.2"/></svg>
<div class="s" style="left:1387px;top:651.5px;color:#222">6</div>
<div class="a" style="left:1095px;top:669px;width:444px;height:19px;background:#dfe2e6"></div>
<svg class="a" style="left:1113px;top:675px" width="5" height="8"><path d="M0 0v8l4-4z" fill="#222"/></svg>
<div class="bdg" style="left:1123px;top:672px;width:14px"><i>DA</i></div>
<div class="s" style="left:1141px;top:671.5px;color:#222">q</div>
<div class="s" style="left:1336px;top:671.5px;color:#333;font-size:10.5px">[ST]</div>
<svg class="a" style="left:1357px;top:673px" width="12" height="12"><path d="M1 0.5h4.5l2 2V9H1z" fill="#4a90e2"/><path d="M2.5 4.5h3M2.5 6.5h3" stroke="#dbe8f8"/><path d="M7 5h4v3H8" fill="#4a90e2"/><path d="M7.5 5v7" stroke="#4a90e2" stroke-width="1.2"/></svg>
<div class="a" style="left:1370px;top:672px;width:3px;height:8px;background:#ff5a10"></div><div class="a" style="left:1370px;top:682px;width:3px;height:2px;background:#ff5a10"></div>
<div class="s" style="left:1387px;top:671.5px;color:#222">good</div>
<div class="a" style="left:1095px;top:689px;width:444px;height:19px;background:#dfe2e6"></div>
<svg class="a" style="left:1112px;top:697px" width="7" height="7"><path d="M6 0v6H0z" fill="#222"/></svg>
<div class="bdg" style="left:1123px;top:692px;width:14px"><i>DA</i></div>
<div class="s" style="left:1141px;top:691.5px;color:#222">t</div>
<div class="s" style="left:1336px;top:691.5px;color:#333;font-size:10.5px">[ST]</div>
<svg class="a" style="left:1357px;top:693px" width="12" height="12"><path d="M1 0.5h4.5l2 2V9H1z" fill="#4a90e2"/><path d="M2.5 4.5h3M2.5 6.5h3" stroke="#dbe8f8"/><path d="M7 5h4v3H8" fill="#4a90e2"/><path d="M7.5 5v7" stroke="#4a90e2" stroke-width="1.2"/></svg>
<div class="a" style="left:1370px;top:692px;width:3px;height:8px;background:#ff5a10"></div><div class="a" style="left:1370px;top:702px;width:3px;height:2px;background:#ff5a10"></div>
<div class="s" style="left:1387px;top:691.5px;color:#222">09.10.2018 16:36:07.340</div>
<div class="a" style="left:1095px;top:709px;width:444px;height:19px;background:#dfe2e6"></div>
<div class="s" style="left:1151px;top:711.5px;color:#222">LeapSecondsKnown</div>
<svg class="a" style="left:1361px;top:713px" width="12" height="12"><path d="M1 0.5h4.5l2 2V9H1z" fill="#4a90e2"/><path d="M2.5 4.5h3M2.5 6.5h3" stroke="#dbe8f8"/><path d="M7 5h4v3H8" fill="#4a90e2"/><path d="M7.5 5v7" stroke="#4a90e2" stroke-width="1.2"/></svg>
<div class="s" style="left:1387px;top:711.5px;color:#222">false</div>
<div class="a" style="left:1095px;top:729px;width:444px;height:19px;background:#dfe2e6"></div>
<div class="s" style="left:1151px;top:731.5px;color:#222">ClockFailure</div>
<svg class="a" style="left:1361px;top:733px" width="12" height="12"><path d="M1 0.5h4.5l2 2V9H1z" fill="#4a90e2"/><path d="M2.5 4.5h3M2.5 6.5h3" stroke="#dbe8f8"/><path d="M7 5h4v3H8" fill="#4a90e2"/><path d="M7.5 5v7" stroke="#4a90e2" stroke-width="1.2"/></svg>
<div class="s" style="left:1387px;top:731.5px;color:#222">false</div>
<div class="a" style="left:1095px;top:749px;width:444px;height:19px;background:#dfe2e6"></div>
<div class="s" style="left:1151px;top:751.5px;color:#222">ClockNotSynchronized</div>
<svg class="a" style="left:1361px;top:753px" width="12" height="12"><path d="M1 0.5h4.5l2 2V9H1z" fill="#4a90e2"/><path d="M2.5 4.5h3M2.5 6.5h3" stroke="#dbe8f8"/><path d="M7 5h4v3H8" fill="#4a90e2"/><path d="M7.5 5v7" stroke="#4a90e2" stroke-width="1.2"/></svg>
<div class="s" style="left:1387px;top:751.5px;color:#222">false</div>
<div class="a" style="left:1095px;top:769px;width:444px;height:19px;background:#dfe2e6"></div>
<div class="s" style="left:1151px;top:771.5px;color:#222">TimeAccuracy</div>
<svg class="a" style="left:1361px;top:773px" width="12" height="12"><path d="M1 0.5h4.5l2 2V9H1z" fill="#4a90e2"/><path d="M2.5 4.5h3M2.5 6.5h3" stroke="#dbe8f8"/><path d="M7 5h4v3H8" fill="#4a90e2"/><path d="M7.5 5v7" stroke="#4a90e2" stroke-width="1.2"/></svg>
<div class="s" style="left:1387px;top:771.5px;color:#222">10ms - T0</div>
<div class="a" style="left:1111px;top:688px;width:396px;height:22px;border:2px solid #2ea860"></div>
<div class="a" style="left:1147px;top:748px;width:287px;height:21px;border:2px solid #2ea860"></div>
<div class="a" style="left:829px;top:808px;width:710px;height:2px;background:#fff"></div><div class="a" style="left:1094px;top:607px;width:1px;height:182px;background:#b8bfca"></div><div class="a" style="left:1094px;top:788px;width:445px;height:1px;background:#b8bfca"></div>

<!--/IEDSCOUT-->
</body></html>
